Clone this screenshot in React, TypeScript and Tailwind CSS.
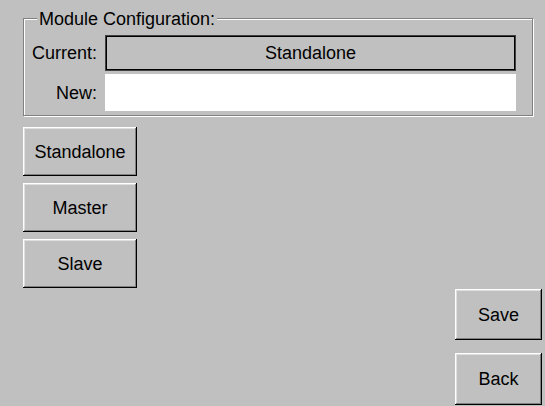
import React from "react";

const raised =
  "bg-[#c0c0c0] text-black shadow-[inset_-1px_-1px_0_#000000,inset_1px_1px_0_#ffffff,inset_-2px_-2px_0_#808080,inset_2px_2px_0_#dfdfdf] flex items-center justify-center";

function Button({ label, className }: { label: string; className: string }) {
  return (
    <button type="button" className={`${raised} ${className}`}>
      {label}
    </button>
  );
}

export default function App() {
  return (
    <div
      className="w-[545px] h-[406px] bg-[#c0c0c0] flex flex-col text-[18px] leading-[20px] text-black overflow-hidden"
      style={{ fontFamily: '"Liberation Sans", Arial, sans-serif' }}
    >
      {/* Group box with etched frame */}
      <div className="relative ml-[23px] mt-[18px] w-[510px] h-[98px] border border-[#808080] shadow-[inset_1px_1px_0_#ffffff,1px_1px_0_#ffffff] pt-[16px] pr-[16px] pb-[4px]">
        <div className="absolute left-[13px] top-[-10px] px-[2px] bg-[#c0c0c0]">
          Module Configuration:
        </div>
        <div className="grid grid-cols-[73px_411px] grid-rows-[36px_37px] gap-x-[8px] gap-y-[3px]">
          <div className="flex items-center justify-end">Current:</div>
          <div className="border border-[#404040] flex">
            <div className="flex-1 border border-black flex items-center justify-center">
              Standalone
            </div>
          </div>
          <div className="flex items-center justify-end">New:</div>
          <div className="bg-white" />
        </div>
      </div>

      {/* Mode selection */}
      <div className="ml-[23px] mt-[11px] flex flex-col gap-[7px]">
        <Button label="Standalone" className="w-[114px] h-[49px]" />
        <Button label="Master" className="w-[114px] h-[49px]" />
        <Button label="Slave" className="w-[114px] h-[49px]" />
      </div>

      {/* Actions */}
      <div className="self-end mr-[3px] mt-[1px] flex flex-col gap-[13px]">
        <Button label="Save" className="w-[87px] h-[51px]" />
        <Button label="Back" className="w-[87px] h-[52px]" />
      </div>
    </div>
  );
}
